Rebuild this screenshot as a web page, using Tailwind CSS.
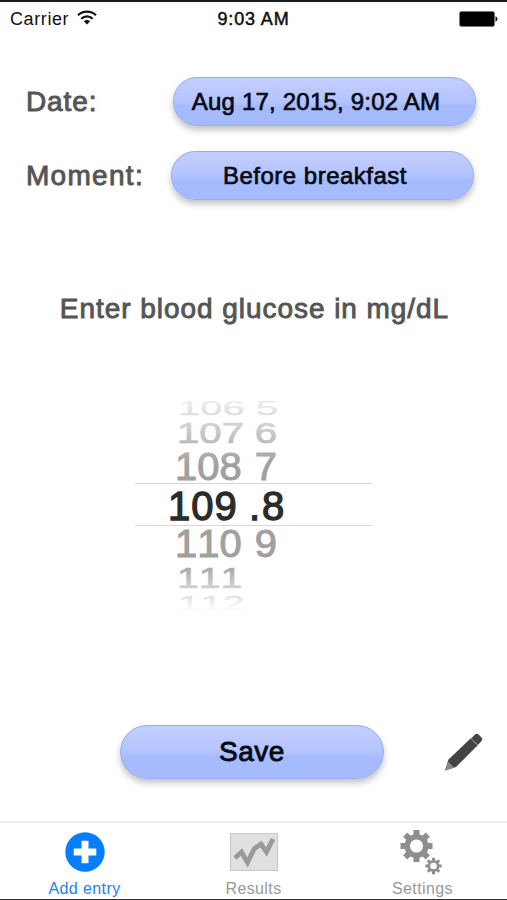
<!DOCTYPE html>
<html lang="en">
<head>
    <meta charset="UTF-8">
    <meta name="viewport" content="width=device-width, initial-scale=1.0">
    <title>Add entry</title>
    <script src="https://cdn.jsdelivr.net/npm/@tailwindcss/browser@4"></script>
</head>
<body class="bg-white font-['Liberation_Sans',Arial,sans-serif]">
    <div class="w-[507px] h-[900px] flex flex-col overflow-hidden border-t-2 border-b border-t-[#1c1a1c] border-b-[#333]">
        <!-- Status bar -->
        <header class="h-[34px] grid grid-cols-3 items-center px-[10px] text-[18px] text-[#111]">
            <div class="flex items-center gap-2">
                <span class="tracking-[0.6px]">Carrier</span>
                <svg class="w-5 h-[15px] -mt-[3px]" viewBox="0 0 20 15" fill="none" stroke="#111" stroke-width="2.2">
                    <path d="M1 5.2a13 13 0 0 1 18 0"/>
                    <path d="M4.3 8.7a8.2 8.2 0 0 1 11.4 0"/>
                    <path d="M10 14.6 6.8 11.3a4.6 4.6 0 0 1 6.4 0z" fill="#111" stroke="none"/>
                </svg>
            </div>
            <div class="text-center tracking-[0.85px] whitespace-nowrap [-webkit-text-stroke:0.5px_#111]">9:03 AM</div>
            <svg class="justify-self-end w-[39px] h-4 -mr-px" viewBox="0 0 39 16">
                <rect x="0.5" y="0.5" width="35" height="15" rx="2" fill="#000" stroke="#777"/>
                <path d="M36.5 5q4 3 0 6z" fill="#111"/>
            </svg>
        </header>

        <!-- Entry form -->
        <main class="h-[785px] flex flex-col">
            <div class="mt-[41px] flex items-center h-[49px] pl-[26px]">
                <div class="w-[147px] text-[28px] tracking-[0.9px] text-[#555] [-webkit-text-stroke:0.9px_#555]">Date:</div>
                <button class="w-[303px] h-[49px] rounded-[24px] border border-[#98acf3] bg-linear-to-b from-[#c1cdff] from-5% via-[#b3c4fe] via-50% to-[#a6bbfe] to-60% shadow-[0_4px_6px_rgba(0,0,0,0.24)] pr-[17px] text-[24px] tracking-[0.2px] text-[#080a14] [-webkit-text-stroke:0.7px_#080a14]">Aug 17, 2015, 9:02 AM</button>
            </div>
            <div class="mt-[25px] flex items-center h-[49px] pl-[26px]">
                <div class="w-[145px] text-[28px] tracking-[1.3px] text-[#555] [-webkit-text-stroke:0.9px_#555]">Moment:</div>
                <button class="w-[303px] h-[49px] rounded-[24px] border border-[#98acf3] bg-linear-to-b from-[#c1cdff] from-5% via-[#b3c4fe] via-50% to-[#a6bbfe] to-60% shadow-[0_4px_6px_rgba(0,0,0,0.24)] pr-[15px] text-[24px] tracking-[0.5px] text-[#080a14] [-webkit-text-stroke:0.7px_#080a14]">Before breakfast</button>
            </div>

            <h1 class="mt-[89px] h-10 leading-10 pl-[2px] text-center text-[28px] tracking-[0.95px] text-[#555] [-webkit-text-stroke:0.9px_#555]">Enter blood glucose in mg/dL</h1>

            <!-- Picker wheel: rows get flatter towards the ends -->
            <div class="relative mt-[66px] ml-[135px] w-[238px] h-[216px] leading-none text-[#a0a0a0] [font-kerning:none]">
                <div class="h-[24px] pl-[43px] text-[21px] [-webkit-text-stroke:0.4px]">
                    <div class="h-full flex items-center origin-left scale-x-[1.9]"><span class="w-[41px]">106</span><span>5</span></div>
                </div>
                <div class="h-[28px] pl-[42px] text-[30px] [-webkit-text-stroke:0.7px]">
                    <div class="h-full flex items-center origin-left scale-x-[1.34]"><span class="w-[58px]">107</span><span>6</span></div>
                </div>
                <div class="h-[39px] pl-[40px] text-[38px] [-webkit-text-stroke:1px]">
                    <div class="h-full flex items-center origin-left scale-x-[1.05]"><span class="w-[76px]">108</span><span>7</span></div>
                </div>
                <div class="h-[39px] pl-[33px] flex items-center text-[40px] text-[#2b2b2b] [-webkit-text-stroke:1.3px]"><span class="w-[81px] tracking-[1px]">109</span><span class="tracking-[2px]">.8</span></div>
                <div class="h-[37px] pl-[40px] text-[38px] [-webkit-text-stroke:1px]">
                    <div class="h-full flex items-center origin-left scale-x-[1.05]"><span class="w-[76px]">110</span><span>9</span></div>
                </div>
                <div class="h-[31px] pl-[42px] text-[30px] [-webkit-text-stroke:0.7px]">
                    <div class="h-full flex items-center origin-left scale-x-[1.3]"><span>111</span></div>
                </div>
                <div class="h-[19px] pl-[43px] text-[21px] [-webkit-text-stroke:0.4px]">
                    <div class="h-full flex items-center origin-left scale-x-[1.9]"><span>112</span></div>
                </div>
                <div class="absolute inset-x-0 top-0 h-[70px] bg-linear-to-b from-white/90 to-white/0"></div>
                <div class="absolute inset-x-0 bottom-0 h-[48px] bg-linear-to-t from-white to-white/0"></div>
                <div class="absolute inset-x-0 top-[88px] h-[43px] border-y border-[#d8d8d8]"></div>
            </div>

            <div class="mt-[114px] flex items-center h-[54px] pl-[120px]">
                <button class="w-[264px] h-[54px] rounded-[27px] border border-[#98acf3] bg-linear-to-b from-[#c1cdff] from-5% via-[#b3c4fe] via-50% to-[#a6bbfe] to-60% shadow-[0_4px_6px_rgba(0,0,0,0.24)] text-[28px] tracking-[0.5px] text-[#080a14] [-webkit-text-stroke:0.9px_#080a14]">Save</button>
                <svg class="ml-[60px] w-[39px] h-[38px]" viewBox="0 0 39 38" fill="#444">
                    <path d="M27 5.500 31 1.500q2-1.600 4 .4l2.500 2.700q1.500 1.800 0 3.300L34 12z"/>
                    <path d="M26.500 5.500 33.500 12.500 12 34 1 37.500 4.500 26.500z"/>
                    <path d="M4 28.500 10 34.500 1 37.500z" fill="#888"/>
                    <path d="M26.500 5.500 33.500 12.500" stroke="#777" stroke-width="1"/>
                </svg>
            </div>
        </main>

        <!-- Tab bar -->
        <nav class="grow grid grid-cols-[169px_169px_169px] border-t-2 border-[#ededed] text-[16px] leading-5 text-[#999]">
            <a class="flex flex-col items-center text-[#1b82f5]">
                <svg class="mt-[9px] w-10 h-10" viewBox="0 0 40 40">
                    <circle cx="20" cy="20" r="19.700" fill="#047dff"/>
                    <path d="M16.500 8.700h7v7.800h7.800v7h-7.800v7.800h-7v-7.800H8.700v-7h7.800z" fill="#fff"/>
                </svg>
                <span class="mt-[7px] tracking-[0.4px]">Add entry</span>
            </a>
            <a class="flex flex-col items-center">
                <svg class="mt-[9px] w-12 h-10" viewBox="0 0 48 40">
                    <rect x="0.500" y="1.500" width="47" height="37" fill="#e0e0e0" stroke="#c8c8c8"/>
                    <path d="M5 26 11.500 20 17.500 30.500 24 17 31 12 36.500 20 43 7" fill="none" stroke="#999" stroke-width="4.800"/>
                </svg>
                <span class="mt-[7px] tracking-[0.4px]">Results</span>
            </a>
            <a class="flex flex-col items-center">
                <svg class="mt-[6px] mr-[3px] w-[42px] h-[46px]" viewBox="0 0 42 46" fill="none" stroke="#8e8e8e">
                    <circle cx="16.500" cy="17" r="9.300" stroke-width="5.500"/>
                    <g stroke-width="6">
                        <path d="M16.500 1v5M16.500 28v5M.5 17h5M27.500 17h5"/>
                        <path d="m5.200 5.700 3.500 3.500M24.300 24.800l3.500 3.500M27.800 5.700l-3.500 3.500M8.700 24.800l-3.500 3.500"/>
                    </g>
                    <circle cx="33.500" cy="37" r="4.600" stroke-width="2.600"/>
                    <g stroke-width="3">
                        <path d="M33.500 28.800v3M33.500 42.200v3M25.300 37h3M38.700 37h3"/>
                        <path d="m27.800 31.300 2 2M37.200 40.700l2 2M39.200 31.300l-2 2M29.800 40.700l-2 2"/>
                    </g>
                </svg>
                <span class="mt-[4px] tracking-[0.4px]">Settings</span>
            </a>
        </nav>
    </div>
</body>
</html>
